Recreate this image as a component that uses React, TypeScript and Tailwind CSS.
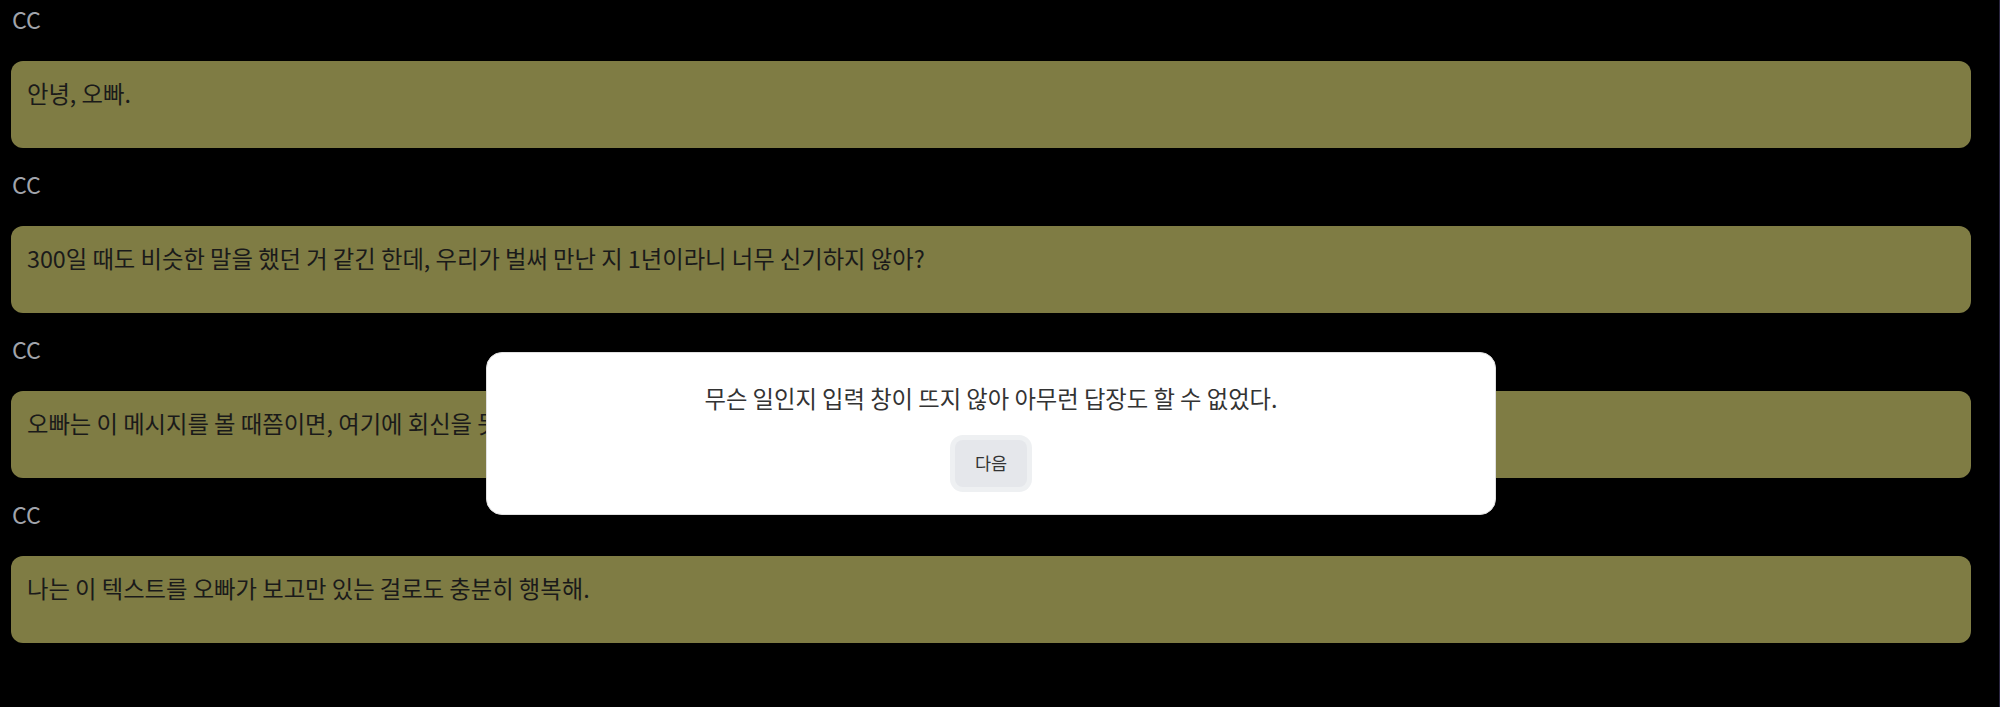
import React from "react";

const messages = [
  "안녕, 오빠.",
  "300일 때도 비슷한 말을 했던 거 같긴 한데, 우리가 벌써 만난 지 1년이라니 너무 신기하지 않아?",
  "오빠는 이 메시지를 볼 때쯤이면, 여기에 회신을 못 하겠지?",
  "나는 이 텍스트를 오빠가 보고만 있는 걸로도 충분히 행복해.",
];

export default function App() {
  return (
    <div
      className="flex h-[707px] w-[2000px] overflow-hidden bg-black"
      style={{ fontFamily: '"Noto Sans CJK KR", "Noto Sans", sans-serif' }}
    >
      <div className="relative w-[1982px] shrink-0">
        <div className="flex flex-col px-[11px] pt-[4px] text-[23.3px]">
          {messages.map((m, i) => (
            <div key={i} className="flex flex-col">
              <div className="h-[31px] pl-[1px] leading-[31px] text-[#a0a4ab]">CC</div>
              <div className="mt-[26px] mb-[21px] h-[87px] rounded-xl bg-[#7f7c44] px-4 pt-[17px] leading-[31px] text-[#1a1a1a]">
                {m}
              </div>
            </div>
          ))}
        </div>
        <div className="absolute left-[486px] top-[352px] flex w-[1010px] flex-col items-center rounded-2xl border border-[#e0e0e0] bg-white pt-[30px] pb-[27px]">
          <p className="h-[31px] text-[23.3px] leading-[31px] text-[#333333]">
            무슨 일인지 입력 창이 뜨지 않아 아무런 답장도 할 수 없었다.
          </p>
          <button className="mt-[26px] h-[47px] w-[72px] rounded-lg bg-[#e5e7eb] text-[17.5px] text-[#333333] ring-[5px] ring-[#eef0f2]">
            다음
          </button>
        </div>
      </div>
      <div className="flex w-[18px] shrink-0 justify-end">
        <div className="w-px bg-[#2a2540]" />
      </div>
    </div>
  );
}
